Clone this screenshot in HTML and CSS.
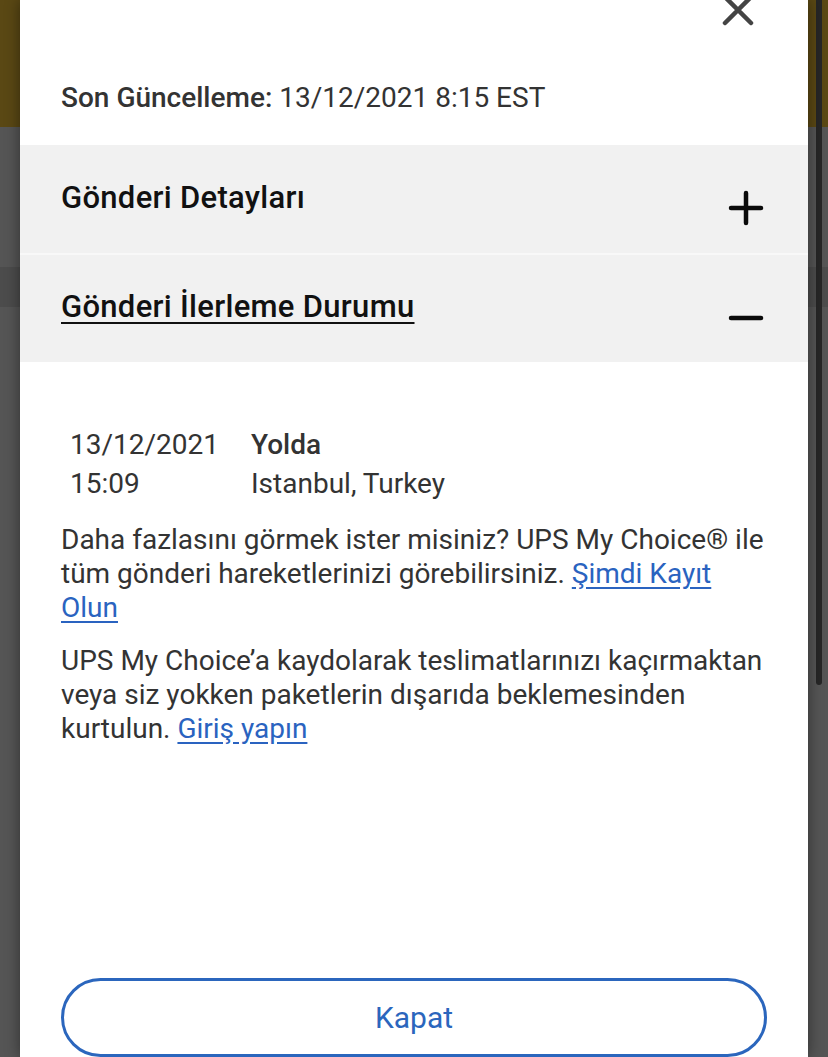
FILE: index.html
```html
<!DOCTYPE html>
<html lang="tr">
<head>
    <meta charset="UTF-8">
    <meta name="viewport" content="width=device-width, initial-scale=1.0">
    <title>Gönderi Takibi</title>
    <link rel="stylesheet" href="styles.css">
</head>
<body>

<div class="backdrop">
    <div class="scrollbar"></div>

    <div class="modal">
        <div class="close-row">
            <button class="close-btn" aria-label="Kapat">
                <svg width="36" height="36" viewBox="0 0 36 36">
                    <path d="M5 5 L31 31 M31 5 L5 31" stroke="#444" stroke-width="4.5" stroke-linecap="round" fill="none"/>
                </svg>
            </button>
        </div>

        <p class="updated"><strong>Son Güncelleme:</strong> 13/12/2021 8:15 EST</p>

        <div class="accordion">
            <div class="acc-head">
                <h2>Gönderi Detayları</h2>
                <svg class="acc-icon" width="36" height="36" viewBox="0 0 36 36">
                    <path d="M3 18 H33 M18 3 V33" stroke="#0a0a0a" stroke-width="4.5" stroke-linecap="round" fill="none"/>
                </svg>
            </div>
            <div class="acc-head">
                <h2 class="open">Gönderi İlerleme Durumu</h2>
                <svg class="acc-icon minus" width="36" height="36" viewBox="0 0 36 36">
                    <path d="M3 18 H33" stroke="#0a0a0a" stroke-width="4.5" stroke-linecap="round" fill="none"/>
                </svg>
            </div>
        </div>

        <div class="progress">
            <div class="event">
                <div class="event-date">13/12/2021<br>15:09</div>
                <div class="event-info"><strong>Yolda</strong><br>Istanbul, Turkey</div>
            </div>

            <p class="note">Daha fazlasını görmek ister misiniz? UPS My Choice® ile tüm gönderi hareketlerinizi görebilirsiniz. <a href="#">Şimdi Kayıt Olun</a></p>
            <p class="note">UPS My Choice’a kaydolarak teslimatlarınızı kaçırmaktan veya siz yokken paketlerin dışarıda beklemesinden kurtulun. <a href="#">Giriş yapın</a></p>
        </div>

        <div class="footer">
            <button class="btn-outline">Kapat</button>
        </div>
    </div>
</div>

</body>
</html>
```

FILE: styles.css
```css
/* Reset dan dasar */
* {
    margin: 0;
    padding: 0;
    box-sizing: border-box;
}

html, body {
    height: 100%;
    overflow: hidden;
}

body {
    font-family: Roboto, "Noto Sans", Arial, sans-serif;
    color: #333;
    background-color: #555;
}

.backdrop {
    position: relative;
    height: 100%;
    padding: 0 20px;
    background:
        linear-gradient(#5a4814, #5a4814) top / 100% 127px no-repeat,
        linear-gradient(to bottom, transparent 267px, #4c4c4c 267px, #4c4c4c 307px, transparent 307px),
        #555;
}

/* scrollbar page belakang */
.scrollbar {
    position: absolute;
    top: 0;
    right: 6px;
    width: 6px;
    height: 685px;
    background-color: #262626;
    border-radius: 0 0 3px 3px;
}

.modal {
    position: relative;
    height: 100%;
    background-color: #fff;
    display: flex;
    flex-direction: column;
    box-shadow: 0 0 14px rgba(0, 0, 0, 0.45);
}

.close-row {
    height: 56px;
    display: flex;
    justify-content: flex-end;
    padding-right: 52px;
}

.close-btn {
    border: none;
    background: none;
    margin-top: -8px;
    height: 36px;
    cursor: pointer;
}

.updated {
    font-size: 28px;
    line-height: 34px;
    padding: 25px 41px 30px;
    color: #333;
}

.updated strong {
    font-weight: 500;
}

.accordion {
    display: flex;
    flex-direction: column;
    gap: 2px;
    background-color: #f8f8f8;
}

.acc-head {
    height: 108px;
    background-color: #f1f1f1;
    display: flex;
    align-items: center;
    justify-content: space-between;
    padding: 0 44px 0 41px;
}

.acc-head + .acc-head {
    height: 107px;
}

.acc-head h2 {
    font-size: 31px;
    font-weight: 500;
    letter-spacing: 0.3px;
    color: #111;
    line-height: 38px;
    margin-top: -3px;
}

.acc-head h2.open {
    text-decoration: underline;
    text-underline-offset: 5px;
    text-decoration-thickness: 2px;
}

.acc-icon {
    margin-top: 17px;
}

.acc-icon.minus {
    margin-top: 18px;
}

.progress {
    padding: 63px 41px 0;
}

.event {
    display: flex;
    font-size: 28px;
    line-height: 39px;
    padding-left: 9px;
    margin-bottom: 20px;
}

.event-date {
    width: 181px;
}

.event-info strong {
    font-weight: 500;
}

.note {
    font-size: 28px;
    line-height: 34px;
    margin-bottom: 19px;
}

.note a {
    color: #2a63c0;
    text-underline-offset: 4px;
}

.footer {
    margin-top: auto;
    padding: 0 41px 0;
}

.btn-outline {
    width: 100%;
    height: 79px;
    border: 3px solid #2b66bd;
    border-radius: 40px;
    background-color: #fff;
    color: #2b66bd;
    font-family: Roboto, "Noto Sans", Arial, sans-serif;
    font-size: 30px;
    cursor: pointer;
}
```
